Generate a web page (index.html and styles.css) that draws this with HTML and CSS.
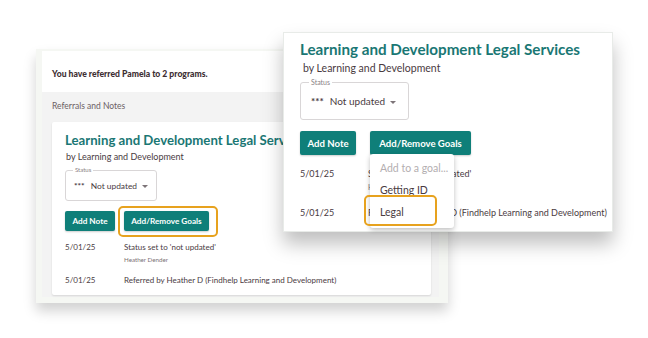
FILE: index.html
```html
<!DOCTYPE html>
<html>
<head>
<meta charset="utf-8">
<link rel="stylesheet" href="styles.css">
</head>
<body>
<div class="canvas">
  <div class="win-back">
    <div class="panel">
      <div class="panel-head">You have referred Pamela to 2 programs.</div>
      <div class="panel-sub">Referrals and Notes</div>
      <div class="card">
        <div class="title">Learning and Development Legal Services</div>
        <div class="by">by Learning and Development</div>
        <div class="status">
          <span class="status-label">Status</span>
          <span class="status-val"><span class="dots">***</span>Not updated</span>
          <span class="caret"></span>
        </div>
        <div class="btns">
          <span class="btn">Add Note</span>
          <span class="btn btn-goals">Add/Remove Goals<span class="ring ring-back"></span></span>
        </div>
        <div class="row">
          <span class="date">5/01/25</span>
          <div class="note"><div>Status set to 'not updated'</div><div class="author">Heather Dender</div></div>
        </div>
        <div class="row row2">
          <span class="date">5/01/25</span>
          <div class="note"><div>Referred by Heather D (Findhelp Learning and Development)</div></div>
        </div>
      </div>
    </div>
  </div>

  <div class="win-front">
    <div class="title">Learning and Development Legal Services</div>
    <div class="by">by Learning and Development</div>
    <div class="status">
      <span class="status-label">Status</span>
      <span class="status-val"><span class="dots">***</span>Not updated</span>
      <span class="caret"></span>
    </div>
    <div class="btns">
      <span class="btn">Add Note</span>
      <span class="btn btn-goals">Add/Remove Goals</span>
    </div>
    <div class="row">
      <span class="date">5/01/25</span>
      <div class="note"><div>Status set to 'not updated'</div><div class="author">Heather Dender</div></div>
    </div>
    <div class="row row2">
      <span class="date">5/01/25</span>
      <div class="note"><div>Referred by Heather D (Findhelp Learning and Development)</div></div>
    </div>
    <div class="menu">
      <div class="menu-item placeholder">Add to a goal...</div>
      <div class="menu-item">Getting ID</div>
      <div class="menu-item">Legal<span class="ring ring-front"></span></div>
    </div>
  </div>
</div>
</body>
</html>
```

FILE: styles.css
```css
* { box-sizing: border-box; }
html, body { margin: 0; padding: 0; background: #fff; }
body { font-family: "Lato", "Open Sans", sans-serif; color: #4a3b3f; }
.canvas { position: relative; width: 648px; height: 338px; overflow: hidden; background: #fff; }
.note, .title, .by, .status-val, .menu-item, .btn, .panel-head { white-space: nowrap; }

/* back window */
.win-back {
  position: absolute; left: 36px; top: 49px; width: 412px; height: 254px;
  background: #f5f7f3; padding: 2px 9px 6px 6px;
  box-shadow: 0 8px 12px rgba(0,0,0,0.18);
}
.win-back .panel { height: 100%; background: #f3f3f3; display: flex; flex-direction: column; }
.win-back .panel-head {
  height: 41px; background: #fff; padding: 18px 0 0 10px;
  font-size: 8.6px; font-weight: 900; color: #3d2e32;
}
.win-back .panel-sub { padding: 9px 0 0 10px; height: 30px; font-size: 8.5px; color: #6b6064; }
.win-back .card {
  margin: 0 0 0 10px; width: 379px; height: 173px; background: #fff;
  border-radius: 2px; padding: 9px 0 0 13px; position: relative;
  box-shadow: 0 1px 2px rgba(0,0,0,0.12);
}
.title { font-weight: 700; color: #1a7774; }
.win-back .title { font-size: 13.2px; line-height: 18px; }
.win-back .by { font-size: 9px; line-height: 12px; margin-top: 2px; padding-left: 1px; }
.status {
  position: relative; border: 1px solid #d9d6d7; border-radius: 3px;
  display: flex; align-items: center;
}
.status-label { position: absolute; background: #fff; color: #8a8185; padding: 0 2px; }
.dots { font-weight: 700; }
.caret { position: absolute; width: 0; height: 0; border-left: 3px solid transparent; border-right: 3px solid transparent; border-top: 3px solid #7d7478; }
.win-back .status { width: 92px; height: 31px; margin-top: 7px; padding-left: 8px; font-size: 8.4px; }
.win-back .dots { margin-right: 6px; }
.win-back .status-label { top: -5px; left: 7px; font-size: 6px; line-height: 8px; }
.win-back .caret { right: 8px; top: 14px; }
.btns { display: flex; }
.btn {
  background: #0f7f79; color: #fff; font-weight: 700; border-radius: 2px;
  display: flex; align-items: center; justify-content: center; position: relative;
  box-shadow: 0 1px 2px rgba(0,0,0,0.2);
}
.win-back .btns { margin-top: 10px; gap: 9px; }
.win-back .btn { height: 20px; font-size: 8.2px; }
.win-back .btn:first-child { width: 50px; }
.win-back .btn-goals { width: 85px; }
.ring { position: absolute; border: 2.5px solid #e7a21e; border-radius: 5px; pointer-events: none; }
.ring-back { left: -6px; top: -5px; right: -9px; bottom: -6px; }
.row { display: flex; }
.date { flex: none; }
.author { color: #7a7074; }
.win-back .row { margin-top: 10px; font-size: 8px; line-height: 12px; }
.win-back .date { width: 59px; }
.win-back .author { font-size: 6.2px; margin-top: 3px; line-height: 8px; }
.win-back .row2 { margin-top: 10px; }

/* front window */
.win-front {
  position: absolute; left: 283px; top: 32px; width: 330px; height: 200px;
  background: #fff; border: 1px solid #e8ebe8; padding: 6px 0 0 16px;
  box-shadow: 0 12px 18px rgba(0,0,0,0.25);
}
.win-front .title { font-size: 15.2px; line-height: 20px; }
.win-front .by { font-size: 10.5px; line-height: 14px; margin-top: 2px; padding-left: 3px; }
.win-front .status { width: 109px; height: 38px; margin-top: 7px; padding-left: 10px; font-size: 10px; }
.win-front .dots { margin-right: 6px; }
.win-front .status-label { top: -5px; left: 8px; font-size: 7px; line-height: 9px; }
.win-front .caret { right: 12px; top: 18px; }
.win-front .btns { margin-top: 11px; gap: 14px; }
.win-front .btn { height: 24px; font-size: 9.6px; }
.win-front .btn:first-child { width: 56px; }
.win-front .btn-goals { width: 101px; }
.win-front .row { margin-top: 12px; font-size: 9px; line-height: 13px; }
.win-front .date { width: 68px; }
.win-front .author { font-size: 7px; margin-top: 3px; line-height: 9px; }
.win-front .row2 { margin-top: 14px; }

.menu {
  position: absolute; left: 86px; top: 121px; width: 84px; height: 74px;
  background: #fff; border-radius: 3px; padding-top: 3px;
  box-shadow: 0 2px 5px rgba(0,0,0,0.25);
}
.menu-item { position: relative; height: 22px; padding-left: 10px; font-size: 10.5px; line-height: 22px; color: #4a3b3f; }
.menu-item.placeholder { color: #b3aeb0; }
.ring-front { left: -6px; top: -6px; width: 73px; height: 31px; }
```
